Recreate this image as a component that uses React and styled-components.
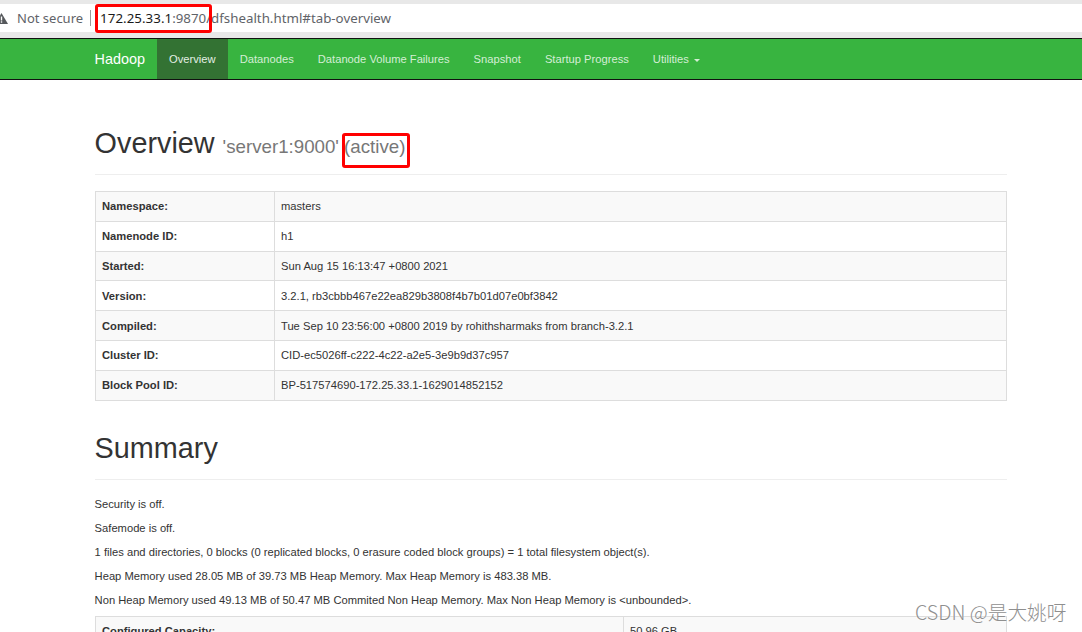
import styled, { createGlobalStyle } from "styled-components";

const GlobalStyle = createGlobalStyle`
	html, body {
		margin: 0;
		padding: 0;
		height: 632px;
		overflow: hidden;
		background: #fff;
		font-family: "Liberation Sans", Arial, sans-serif;
		color: #333;
	}
`;

const Page = styled.div`
	position: relative;
	width: 1082px;
	height: 632px;
	overflow: hidden;
`;

const BrowserBar = styled.div`
	height: 28px;
	border-top: 4px solid #e8e8e8;
	border-bottom: 6px solid #e8e8e8;
	background: #fff;
	display: flex;
	align-items: center;
	font-family: "Noto Sans", sans-serif;
	font-size: 13px;
	color: #5f6368;
`;

const Warning = styled.svg`
	width: 13px;
	height: 11px;
	margin-left: -5px;
	margin-right: 9px;
	flex: none;
`;

const Divider = styled.span`
	width: 1px;
	height: 16px;
	background: #9a9a9a;
	margin: 0 9px 0 7px;
`;

const Url = styled.span`
	font-size: 13.3px;
`;

const Host = styled.span`
	color: #1a1a1a;
	letter-spacing: 0.05px;
`;

const Navbar = styled.nav`
	height: 40px;
	background: #38b440;
	border-top: 1px solid #111;
	border-bottom: 1px solid #111;
	display: flex;
	padding-left: 94.6px;
	font-size: 11.2px;
`;

const Brand = styled.span`
	font-size: 14.4px;
	color: #fff;
	line-height: 40px;
	margin-right: 12px;
`;

const NavItem = styled.span`
	line-height: 40px;
	padding: 0 12px;
	color: ${props => (props.$active ? "#e4efe4" : "#d4eed5")};
	background: ${props => (props.$active ? "#337233" : "transparent")};
`;

const Caret = styled.i`
	display: inline-block;
	width: 0;
	height: 0;
	margin-left: 5px;
	vertical-align: middle;
	border-top: 3px solid #d4eed5;
	border-left: 3px solid transparent;
	border-right: 3px solid transparent;
`;

const Content = styled.main`
	width: 912.4px;
	margin-left: 94.6px;
	padding-top: 45px;
`;

const Header = styled.div`
	border-bottom: 1px solid #eee;
	padding-bottom: ${props => props.$pad}px;
	margin-bottom: ${props => props.$gap}px;
`;

const Heading = styled.h1`
	margin: 0;
	font-weight: 500;
	font-size: 28.8px;
	line-height: 36px;
	color: #333;
`;

const Sub = styled.small`
	font-size: 18.72px;
	font-weight: 400;
	color: #777;
	margin-left: 8px;
`;

const InfoTable = styled.table`
	width: 100%;
	border-collapse: collapse;
	table-layout: fixed;
	font-size: 11.2px;
	background: #fff;
	margin-bottom: ${props => props.$gap || 0}px;

	tr:nth-child(odd) {
		background: #f9f9f9;
	}

	th, td {
		border: 1px solid #ddd;
		height: 29.8px;
		box-sizing: border-box;
		padding: 0 6.4px;
		text-align: left;
		vertical-align: middle;
	}

	th {
		width: ${props => props.$labelWidth}px;
		font-weight: 700;
	}
`;

const Line = styled.p`
	margin: 0;
	font-size: 11.2px;
	line-height: 24px;
	color: #333;
`;

const Lines = styled.div`
	margin-bottom: 4px;
`;

const RedBox = styled.span`
	position: absolute;
	left: ${props => props.$x}px;
	top: ${props => props.$y}px;
	width: ${props => props.$w}px;
	height: ${props => props.$h}px;
	box-sizing: border-box;
	border: 3px solid #f00;
	border-radius: 3px;
`;

const Watermark = styled.span`
	position: absolute;
	left: 915px;
	top: 599px;
	font-family: "Noto Sans CJK SC", "Noto Sans", sans-serif;
	font-size: 19.7px;
	font-weight: 300;
	line-height: 26px;
	color: #8f8f8f;
	text-shadow: 0 0 2px #fff;
	white-space: nowrap;
`;

const overview = [
	["Namespace:", "masters"],
	["Namenode ID:", "h1"],
	["Started:", "Sun Aug 15 16:13:47 +0800 2021"],
	["Version:", "3.2.1, rb3cbbb467e22ea829b3808f4b7b01d07e0bf3842"],
	["Compiled:", "Tue Sep 10 23:56:00 +0800 2019 by rohithsharmaks from branch-3.2.1"],
	["Cluster ID:", "CID-ec5026ff-c222-4c22-a2e5-3e9b9d37c957"],
	["Block Pool ID:", "BP-517574690-172.25.33.1-1629014852152"],
];

const summary = [
	"Security is off.",
	"Safemode is off.",
	"1 files and directories, 0 blocks (0 replicated blocks, 0 erasure coded block groups) = 1 total filesystem object(s).",
	"Heap Memory used 28.05 MB of 39.73 MB Heap Memory. Max Heap Memory is 483.38 MB.",
	"Non Heap Memory used 49.13 MB of 50.47 MB Commited Non Heap Memory. Max Non Heap Memory is <unbounded>.",
];

const navItems = ["Datanodes", "Datanode Volume Failures", "Snapshot", "Startup Progress"];

const App = () => {
	return (
		<Page>
			<GlobalStyle />
			<BrowserBar>
				<Warning viewBox="0 0 13 11">
					<path d="M6.5 0 L13 11 L0 11 Z" fill="#55585c" />
					<rect x="5.8" y="3.5" width="1.4" height="4" fill="#fff" />
					<rect x="5.8" y="8.3" width="1.4" height="1.4" fill="#fff" />
				</Warning>
				Not secure
				<Divider />
				<Url><Host>172.25.33.1</Host>:9870/dfshealth.html#tab-overview</Url>
			</BrowserBar>
			<Navbar>
				<Brand>Hadoop</Brand>
				<NavItem $active>Overview</NavItem>
				{navItems.map(item => <NavItem key={item}>{item}</NavItem>)}
				<NavItem>Utilities<Caret /></NavItem>
			</Navbar>
			<Content>
				<Header $pad={9} $gap={16}>
					<Heading>Overview<Sub>'server1:9000' (active)</Sub></Heading>
				</Header>
				<InfoTable $labelWidth={179} $gap={29}>
					<tbody>
						{overview.map(([label, value]) => (
							<tr key={label}><th>{label}</th><td>{value}</td></tr>
						))}
					</tbody>
				</InfoTable>
				<Header $pad={13} $gap={12}>
					<Heading>Summary</Heading>
				</Header>
				<Lines>
					{summary.map(line => <Line key={line}>{line}</Line>)}
				</Lines>
				<InfoTable $labelWidth={528}>
					<tbody>
						<tr><th>Configured Capacity:</th><td>50.96 GB</td></tr>
					</tbody>
				</InfoTable>
			</Content>
			<RedBox $x={95} $y={4} $w={117} $h={29} />
			<RedBox $x={342} $y={133} $w={68} $h={35} />
			<Watermark>CSDN @是大姚呀</Watermark>
		</Page>
	);
};

export default App;
